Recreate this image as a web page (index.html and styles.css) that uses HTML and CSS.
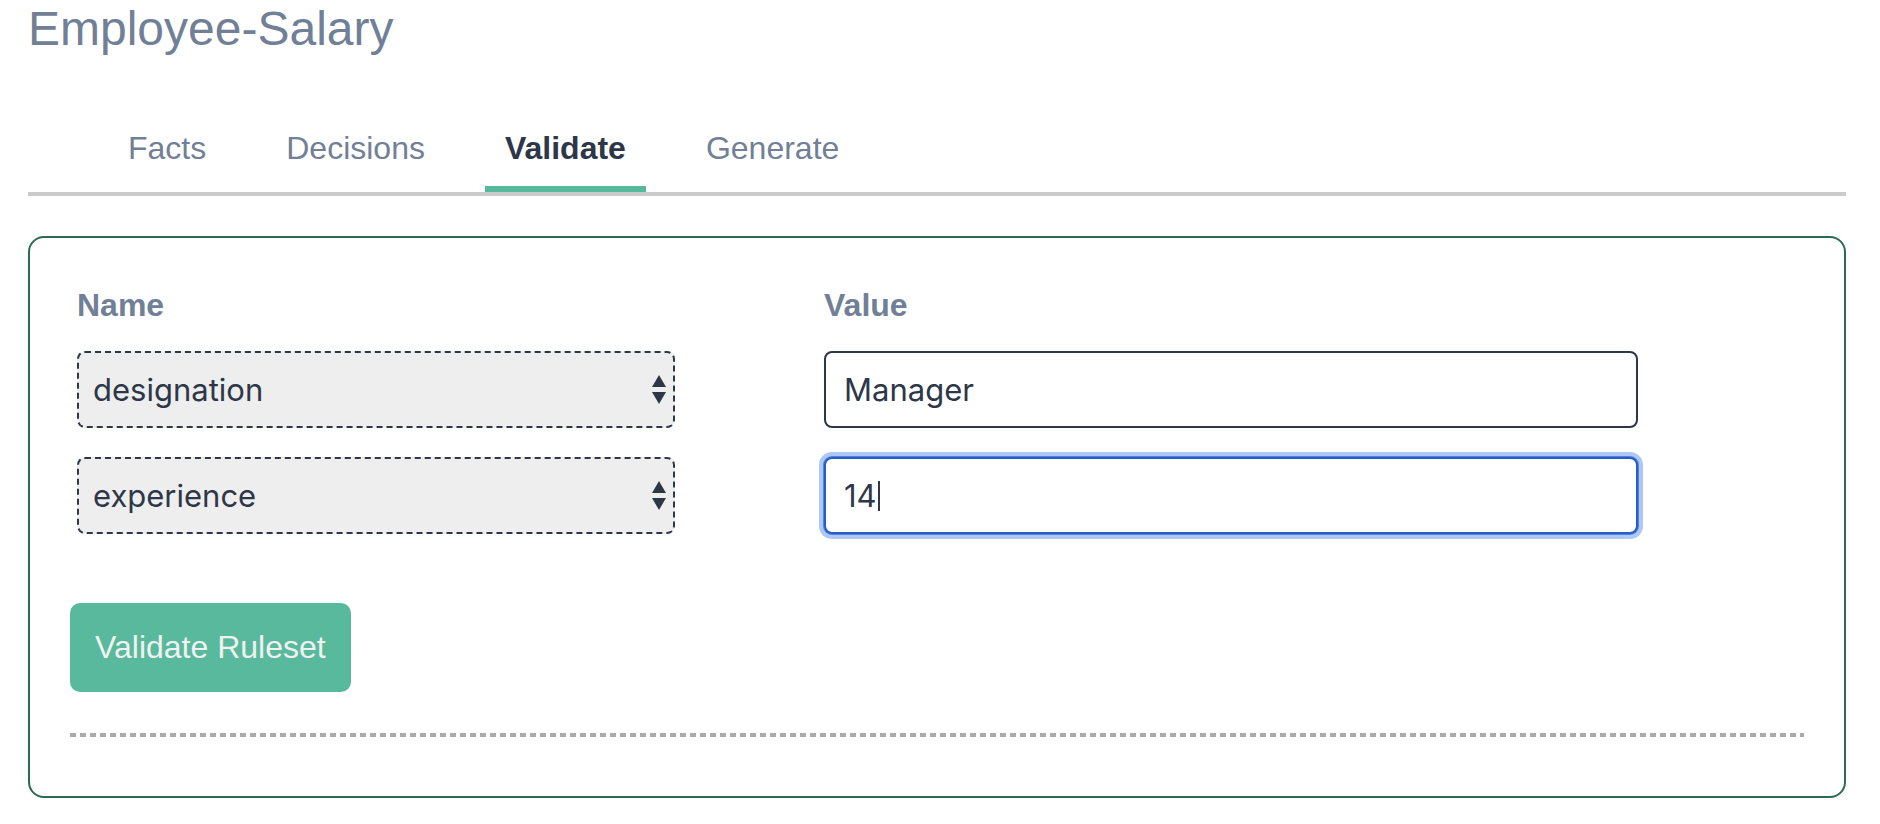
FILE: index.html
```html
<!DOCTYPE html>
<html lang="en">
<head>
<meta charset="utf-8">
<title>Employee-Salary</title>
<link rel="stylesheet" href="styles.css">
</head>
<body>
<div class="page">
  <h1 class="title">Employee-Salary</h1>
  <nav class="tabs">
    <a class="tab">Facts</a>
    <a class="tab">Decisions</a>
    <a class="tab tab-active">Validate</a>
    <a class="tab">Generate</a>
  </nav>
  <section class="card">
    <div class="fact-grid">
      <div class="col-label">Name</div>
      <div class="col-label">Value</div>

      <div class="select">
        <span class="select-text">designation</span>
        <svg class="select-arrows" width="14" height="29" viewBox="0 0 14 29"><polygon points="7,0 14,12 0,12" fill="#2d3748"/><polygon points="0,17 14,17 7,29" fill="#2d3748"/></svg>
      </div>
      <div class="field">Manager</div>

      <div class="select">
        <span class="select-text">experience</span>
        <svg class="select-arrows" width="14" height="29" viewBox="0 0 14 29"><polygon points="7,0 14,12 0,12" fill="#2d3748"/><polygon points="0,17 14,17 7,29" fill="#2d3748"/></svg>
      </div>
      <div class="field field-focus">14<span class="caret"></span></div>
    </div>

    <button class="btn-validate">Validate Ruleset</button>

    <div class="divider"></div>
  </section>
</div>
</body>
</html>
```

FILE: styles.css
```css
* { box-sizing: border-box; }

html, body {
  margin: 0;
  padding: 0;
  background: #ffffff;
}

body {
  font-family: "Liberation Sans", Arial, Helvetica, sans-serif;
  color: #2d3748;
}

.page {
  padding: 0 34px 0 28px;
}

.title {
  margin: 0;
  font-size: 48px;
  line-height: 58px;
  font-weight: 400;
  color: #718096;
}

.tabs {
  display: flex;
  gap: 40px;
  margin-top: 71px;
  padding-left: 80px;
  border-bottom: 4px solid #cbcbcb;
}

.tab {
  font-size: 32px;
  line-height: 38px;
  padding: 0 20px 19px;
  border-bottom: 6px solid transparent;
  color: #718096;
  cursor: pointer;
}

.tab-active {
  font-weight: 700;
  color: #2d3748;
  border-bottom-color: #57b99b;
}

.card {
  margin-top: 40px;
  border: 2px solid #2e6a52;
  border-radius: 16px;
  padding: 48px 40px 59px 40px;
}

.fact-grid {
  display: grid;
  grid-template-columns: 598px 814px;
  column-gap: 149px;
  row-gap: 29px;
  margin-left: 7px;
}

.col-label {
  font-size: 32px;
  line-height: 38px;
  font-weight: 700;
  color: #718096;
  margin-bottom: -2px;
}

.select {
  height: 77px;
  display: flex;
  align-items: center;
  justify-content: space-between;
  padding: 0 7px 0 14px;
  background: #eeeeee;
  border: 2px dashed #2d3748;
  border-radius: 8px;
}

.select-text,
.field {
  font-family: Inter, "Noto Sans", sans-serif;
  font-size: 31px;
  color: #2d3748;
}

.select-arrows {
  display: block;
}

.field {
  height: 77px;
  display: flex;
  align-items: center;
  padding: 0 18px;
  border: 2px solid #2d3748;
  border-radius: 8px;
  background: #ffffff;
}

.field-focus {
  border: 2px solid #2a5cc4;
  box-shadow: 0 0 0 1px #4f84e4, 0 0 0 5px #aec8f5;
}

.caret {
  display: inline-block;
  width: 2px;
  height: 30px;
  margin-left: 1px;
  background: #2d3748;
}

.btn-validate {
  display: block;
  margin-top: 69px;
  height: 89px;
  padding: 0 25px;
  border: none;
  border-radius: 10px;
  background: #59b99c;
  color: #f0f2f1;
  font-family: "Liberation Sans", Arial, Helvetica, sans-serif;
  font-size: 32px;
  cursor: pointer;
}

.divider {
  margin-top: 41px;
  height: 4px;
  background: repeating-linear-gradient(90deg, #aaaaaa 0 6px, transparent 6px 10px);
}
```
